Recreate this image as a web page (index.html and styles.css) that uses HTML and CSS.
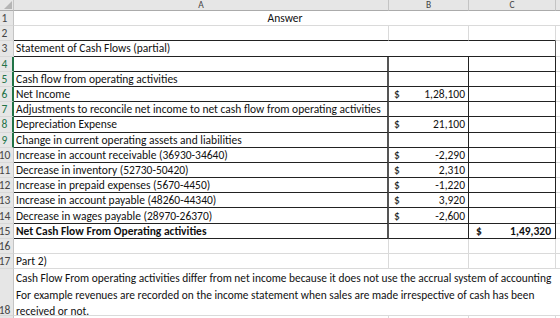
FILE: index.html
```html
<!DOCTYPE html>
<html>
<head>
<meta charset="utf-8">
<link rel="stylesheet" href="styles.css">
</head>
<body>
<div class="sheet">
  <div class="corner"><svg width="8" height="8" viewBox="0 0 8 8"><polygon points="8,0 8,8 0,8" fill="#b5b5b5"/></svg></div>
  <div class="ch">A</div>
  <div class="ch">B</div>
  <div class="ch">C</div>
  <div class="ch last"></div>

  <div class="rh"><span>1</span></div>
  <div class="c span3 center">Answer</div>
  <div class="c g"></div>

  <div class="rh"><span>2</span></div>
  <div class="c gb"></div><div class="c gb"></div><div class="c gb"></div>
  <div class="c g"></div>

  <div class="rh"><span>3</span></div>
  <div class="c span3 bx">Statement of Cash Flows (partial)</div>
  <div class="c g"></div>

  <div class="rh sel"><span>4</span></div>
  <div class="c bx ba"></div><div class="c bx"></div><div class="c bx"></div>
  <div class="c g"></div>

  <div class="rh sel"><span>5</span></div>
  <div class="c bx ba">Cash flow from operating activities</div><div class="c bx"></div><div class="c bx"></div>
  <div class="c g"></div>

  <div class="rh sel"><span>6</span></div>
  <div class="c bx ba">Net Income</div><div class="c bx num"><span>$</span><span>1,28,100</span></div><div class="c bx"></div>
  <div class="c g"></div>

  <div class="rh sel"><span>7</span></div>
  <div class="c bx ba">Adjustments to reconcile net income to net cash flow from operating activities</div><div class="c bx"></div><div class="c bx"></div>
  <div class="c g"></div>

  <div class="rh sel"><span>8</span></div>
  <div class="c bx ba">Depreciation Expense</div><div class="c bx num"><span>$</span><span>21,100</span></div><div class="c bx"></div>
  <div class="c g"></div>

  <div class="rh sel"><span>9</span></div>
  <div class="c bx ba">Change in current operating assets and liabilities</div><div class="c bx"></div><div class="c bx"></div>
  <div class="c g"></div>

  <div class="rh"><span>10</span></div>
  <div class="c bx ba">Increase in account receivable (36930-34640)</div><div class="c bx num"><span>$</span><span>-2,290</span></div><div class="c bx"></div>
  <div class="c g"></div>

  <div class="rh"><span>11</span></div>
  <div class="c bx ba">Decrease in inventory (52730-50420)</div><div class="c bx num"><span>$</span><span>2,310</span></div><div class="c bx"></div>
  <div class="c g"></div>

  <div class="rh"><span>12</span></div>
  <div class="c bx ba">Increase in prepaid expenses (5670-4450)</div><div class="c bx num"><span>$</span><span>-1,220</span></div><div class="c bx"></div>
  <div class="c g"></div>

  <div class="rh"><span>13</span></div>
  <div class="c bx ba">Increase in account payable (48260-44340)</div><div class="c bx num"><span>$</span><span>3,920</span></div><div class="c bx"></div>
  <div class="c g"></div>

  <div class="rh"><span>14</span></div>
  <div class="c bx ba">Decrease in wages payable (28970-26370)</div><div class="c bx num"><span>$</span><span>-2,600</span></div><div class="c bx"></div>
  <div class="c g"></div>

  <div class="rh"><span>15</span></div>
  <div class="c bx ba bold">Net Cash Flow From Operating activities</div><div class="c bx"></div><div class="c bx num numc bold"><span>$</span><span>1,49,320</span></div>
  <div class="c g"></div>

  <div class="rh"><span>16</span></div>
  <div class="c g"></div><div class="c g"></div><div class="c g"></div>
  <div class="c g"></div>

  <div class="rh"><span>17</span></div>
  <div class="c g">Part 2)</div><div class="c g"></div><div class="c g"></div>
  <div class="c g"></div>

  <div class="rh rh-tall"><span>18</span></div>
  <div class="c span3 g wrap">
    <span class="line">Cash Flow From operating activities differ from net income because it does not use the accrual system of accounting</span>
    <span class="line">For example revenues are recorded on the income statement when sales are made irrespective of cash has been</span>
    <span class="line">received or not.</span>
  </div>
  <div class="c g"></div>

  <div class="rh"><span>19</span></div>
  <div class="c g"></div><div class="c g"></div><div class="c g"></div>
  <div class="c g"></div>
</div>
</body>
</html>
```
FILE: styles.css
```css
html, body {
  margin: 0;
  padding: 0;
  background: #fff;
  overflow: hidden;
}
.sheet {
  display: grid;
  grid-template-columns: 14px 375px 80px 87px 20px;
  grid-template-rows: 11px repeat(17, 15.2px) 47px 15px;
  font-family: Carlito, "Lato", "Open Sans", sans-serif;
  font-size: 11.5px;
  color: #111;
  width: 560px;
  height: 318px;
  overflow: hidden;
}
.corner {
  background: #e6e6e6;
  border-right: 1px solid #c4c4c4;
  border-bottom: 1px solid #ababab;
  box-sizing: border-box;
  display: flex;
  align-items: flex-end;
  justify-content: flex-end;
  padding: 0 1px 1px 0;
}
.ch {
  background: #e6e6e6;
  border-right: 1px solid #c4c4c4;
  border-bottom: 1px solid #ababab;
  box-sizing: border-box;
  color: #444;
  text-align: center;
  font-size: 9.5px;
  line-height: 10px;
  overflow: hidden;
}
.ch.last { border-right: none; }
.rh {
  background: #e6e6e6;
  border-right: 1px solid #c4c4c4;
  border-bottom: 1px solid #d8d8d8;
  box-sizing: border-box;
  color: #444;
  overflow: hidden;
  display: flex;
  align-items: center;
}
.rh span {
  display: block;
  width: 17px;
  margin-left: -4px;
  text-align: center;
  flex: none;
}
.rh.sel {
  color: #217346;
  border-right: 2px solid #217346;
}
.rh-tall {
  align-items: flex-end;
}
.rh-tall span {
  line-height: 16.5px;
  margin-bottom: -3px;
}
.c {
  box-sizing: border-box;
  padding: 0 2px;
  white-space: nowrap;
  overflow: visible;
  display: flex;
  align-items: center;
  min-width: 0;
}
.g {
  border-right: 1px solid #dadada;
  border-bottom: 1px solid #dadada;
}
.gb {
  border-right: 1px solid #dadada;
  border-bottom: 1px solid #222;
}
.bx {
  border-right: 1px solid #222;
  border-bottom: 1px solid #222;
}
.ba {
  border-right: 2px solid #555;
}
.span3 {
  grid-column: span 3;
}
.span3.bx { border-right: 1px solid #555; }
.center {
  justify-content: center;
  border-bottom: 1px solid #dadada;
}
.num {
  justify-content: space-between;
  padding: 0 3px 0 5px;
}
.numc {
  padding: 0 4px 0 7px;
}
.bold { font-weight: bold; }
.wrap {
  flex-direction: column;
  align-items: flex-start;
  justify-content: flex-start;
  padding-top: 1px;
  border-right: none;
  font-size: 11.4px;
}
.line {
  display: block;
  line-height: 16.5px;
}
```
